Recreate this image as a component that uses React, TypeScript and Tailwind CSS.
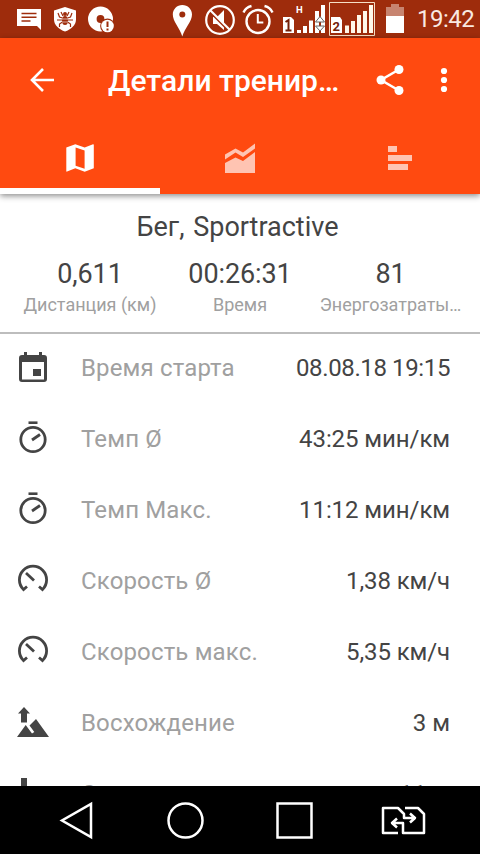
import type { ReactNode } from 'react';

const INK = '#444444';

function Glyph({ x, y, w, h, className = '', children }: { x: number; y: number; w: number; h: number; className?: string; children: ReactNode }) {
  return (
    <svg className={`shrink-0 ${className}`} width={w} height={h} viewBox={`${x} ${y} ${w} ${h}`} fill="none">
      {children}
    </svg>
  );
}

function StatusBar() {
  return (
    <div className="flex h-[38px] shrink-0 items-center bg-[#9e2c0c] text-white">
      <Glyph x={17} y={0} w={24} h={38} className="ml-[17px]">
        <path d="M17 9h24v21l-4-4H17z" fill="#fff" />
        <path d="M21.500 13.500h15M21.500 17.300h15M21.500 21h9" stroke="#9e2c0c" strokeWidth="1.500" />
      </Glyph>
      <Glyph x={54} y={0} w={22} h={38} className="ml-[13px]">
        <path d="M65 7l11 3.500v9C76 25 71 29.500 65 31.500 59 29.500 54 25 54 19.500v-9z" fill="#fff" />
        <ellipse cx="65" cy="20.500" rx="3" ry="4.500" fill="#9e2c0c" />
        <circle cx="65" cy="14" r="2" fill="#9e2c0c" />
        <path d="M62.500 18l-3-1-1.500-4M67.500 18l3-1 1.500-4M62 20h-5M68 20h5M62.500 22l-3 2v3M67.500 22l3 2v3M61 12l2 4M69 12l-2 4" stroke="#9e2c0c" strokeWidth="1.200" />
        <path d="M62 19h6M62 22h6" stroke="#fff" strokeWidth=".6" />
      </Glyph>
      <Glyph x={88} y={0} w={26} h={38} className="ml-[12px]">
        <circle cx="100.500" cy="19" r="8.200" stroke="#fff" strokeWidth="8.600" />
        <circle cx="107.500" cy="26" r="7.400" fill="#9e2c0c" />
        <circle cx="107.500" cy="26" r="6.300" fill="#fff" />
        <path d="M107.500 21.500v5.500M107.500 28.500v2" stroke="#9e2c0c" strokeWidth="2" />
      </Glyph>
      <Glyph x={172} y={0} w={20} h={38} className="ml-[58px]">
        <path d="M182.300 5c5.500 0 9.700 4.200 9.700 9.500 0 7-7 13-9.700 22-2.700-9-9.500-15-9.500-22C172.800 9.200 177 5 182.300 5z" fill="#fff" />
        <circle cx="182.300" cy="14.500" r="3" fill="#9e2c0c" />
      </Glyph>
      <Glyph x={204} y={0} w={32} h={38} className="ml-[12px]">
        <path d="M213 17v7h4l7 6V10l-7 7z" fill="#fff" />
        <path d="M211 13l17 17" stroke="#9e2c0c" strokeWidth="2" />
        <circle cx="220" cy="20" r="13.800" stroke="#fff" strokeWidth="2.200" />
        <path d="M210 10l20 20" stroke="#fff" strokeWidth="2.200" />
      </Glyph>
      <Glyph x={242} y={0} w={32} h={38} className="ml-[6px]">
        <circle cx="258" cy="21.500" r="11.500" stroke="#fff" strokeWidth="2.400" />
        <path d="M243.500 12.500q2-5 8-6.500M272.500 12.500q-2-5-8-6.500" stroke="#fff" strokeWidth="2.400" />
        <path d="M257.800 14v8.500h5.500" stroke="#fff" strokeWidth="2" />
      </Glyph>
      <Glyph x={283} y={0} w={44} h={38} className="ml-[9px]">
        <path d="M283 17h8l3 3v13h-11z" fill="#fff" />
        <path d="M285.500 22l3-2v10M285.500 30.500h6" stroke="#742008" strokeWidth="2" />
        <path d="M297 30h4v3h-4zM303 26h4v7h-4zM309 20.500h4V33h-4zM315 11h4v22h-4zM321 5h4v28h-4z" fill="#fff" />
        <text x="296" y="13" fontSize="9.500" fontWeight="700" fill="#fff" fontFamily="Roboto, sans-serif">H</text>
        <path d="M320 16.500l4.500 5.500h-9zM320 31l4.500-5h-9z" fill="#fff" stroke="#666" strokeWidth="1" />
      </Glyph>
      <Glyph x={328} y={0} w={48} h={38} className="ml-px">
        <path d="M329.500 2.500h45v33h-45z" stroke="#f6dfc6" />
        <path d="M331 17h9l2 3v13h-11z" fill="#fff" />
        <text x="332.500" y="30.500" fontSize="13" fontWeight="700" fill="#742008" fontFamily="Roboto, sans-serif">2</text>
        <path d="M345 25.500h4V33h-4zM351 21h4v12h-4zM357 15h4v18h-4zM363 11h4v22h-4zM369 5h4v28h-4z" fill="#fff8ea" />
      </Glyph>
      <Glyph x={386} y={0} w={18} h={38} className="ml-[10px]">
        <path d="M386 7h5V4h8v3h5v9h-18z" fill="#c78470" />
        <path d="M386 16h18v17h-18z" fill="#fff" />
      </Glyph>
      <span className="ml-[13px] text-[24px] leading-[38px] tracking-[-0.5px] text-[#f9e9e1]">19:42</span>
    </div>
  );
}

function Toolbar() {
  return (
    <header className="relative z-10 h-[156px] shrink-0 bg-[#ff4a10] text-white shadow-[0_2px_6px_rgba(0,0,0,0.45)]">
      <div className="flex h-[84px] items-center">
        <Glyph x={30} y={68} w={25} h={24} className="ml-[30px]">
          <path d="M54 80H32M43 69L32 80l11 11" stroke="#fff" strokeWidth="2.600" />
        </Glyph>
        <h1 className="ml-[53px] w-[240px] whitespace-nowrap pt-[2px] text-[30px] font-medium leading-[38px]">Детали тренир…</h1>
        <Glyph x={376} y={64} w={28} h={32} className="ml-[28px]">
          <path d="M399 69.500L381 80l18 10.500" stroke="#fff" strokeWidth="2.600" />
          <circle cx="399" cy="69.500" r="4.500" fill="#fff" />
          <circle cx="381" cy="80" r="4.500" fill="#fff" />
          <circle cx="399" cy="90.500" r="4.500" fill="#fff" />
        </Glyph>
        <Glyph x={440} y={64} w={8} h={32} className="ml-[36px]">
          <circle cx="444" cy="71" r="3.100" fill="#fff" />
          <circle cx="444" cy="80" r="3.100" fill="#fff" />
          <circle cx="444" cy="89" r="3.100" fill="#fff" />
        </Glyph>
      </div>
      <nav className="grid h-[72px] grid-cols-3">
        <div className="flex justify-center border-b-[6px] border-white pt-[20px]">
          <Glyph x={64} y={142} w={32} h={32}>
            <path fillRule="evenodd" d="M66.300 147.500l9-3.200 9.400 3.200 8.300-3.200q.8-.2.800.6v23.300l-9.100 3.600-9.400-3.600-8.200 3.400q-.8.300-.8-.6zM75.600 147.500v18.200l9 3.100v-18.200z" fill="#fff" />
          </Glyph>
        </div>
        <div className="flex justify-center pt-[20px]">
          <Glyph x={224} y={142} w={32} h={32}>
            <path d="M225 163l10.500-5.500 7.500 3.500 12-9V173h-30z" fill="#ffc4b2" />
            <path d="M225 154.500l10.500-6 7.500 4 12-9v5l-12 8.500-7.500-4.500-10.500 7z" fill="#ffc4b2" />
          </Glyph>
        </div>
        <div className="flex justify-center pt-[20px]">
          <Glyph x={384} y={142} w={32} h={32}>
            <path d="M388 146h9v6h-9zM388 155h24v6h-24zM388 164h20v6h-20z" fill="#ffc4b2" />
          </Glyph>
        </div>
      </nav>
    </header>
  );
}

function Stat({ value, label }: { value: string; label: string }) {
  return (
    <div className="flex flex-col items-center whitespace-nowrap">
      <span className="text-[27px] leading-[34px] tracking-[-0.1px] text-[#444]">{value}</span>
      <span className="text-[18px] leading-[28px] text-[#a0a0a0]">{label}</span>
    </div>
  );
}

function Calendar() {
  return (
    <Glyph x={16} y={350} w={34} h={36}>
      <path fillRule="evenodd" d="M24 352h3v3h12v-3h3v3h2q3 0 3 3v21q0 3-3 3H22q-3 0-3-3v-21q0-3 3-3h2zM22 362v17.500h22V362z" fill={INK} />
      <path d="M33 369h8v7h-8z" fill={INK} />
    </Glyph>
  );
}

function Stopwatch() {
  return (
    <Glyph x={16} y={421} w={34} h={36}>
      <circle cx="33" cy="439.500" r="12.200" stroke={INK} strokeWidth="2.800" />
      <path d="M28.500 422.700h9" stroke={INK} strokeWidth="2.600" />
      <path d="M32 440l8-5.500" stroke={INK} strokeWidth="2.800" />
    </Glyph>
  );
}

function Gauge() {
  return (
    <Glyph x={16} y={563} w={34} h={36}>
      <path d="M27 586.500l-3.500 3A13.600 13.600 0 1 1 42.500 589.500L39 586.500" stroke={INK} strokeWidth="2.800" />
      <path d="M26 573l8 7.500" stroke={INK} strokeWidth="2.800" />
    </Glyph>
  );
}

function Ascent() {
  return (
    <Glyph x={16} y={705} w={34} h={36}>
      <path d="M24 707l6 6.500h-3v9h-6v-9h-3z" fill={INK} />
      <path d="M17 737l8.700-12 6.300 8.500 2.300-1.500-4.800-6.500 6.500-6.500L49 737z" fill={INK} />
    </Glyph>
  );
}

function Descent() {
  return (
    <Glyph x={16} y={776} w={34} h={36}>
      <path d="M21 778h6v9h3l-6 6.500-6-6.500h3zM17 808l8.700-12 6.300 8.500 2.300-1.500-4.800-6.500 6.500-6.500L49 808z" fill={INK} />
    </Glyph>
  );
}

const rows: { icon: ReactNode; label: string; value: string; valueClass: string }[] = [
  { icon: <Calendar />, label: 'Время старта', value: '08.08.18 19:15', valueClass: 'tracking-[-0.38px]' },
  { icon: <Stopwatch />, label: 'Темп Ø', value: '43:25 мин/км', valueClass: 'tracking-[-0.08px]' },
  { icon: <Stopwatch />, label: 'Темп Макс.', value: '11:12 мин/км', valueClass: 'tracking-[-0.08px]' },
  { icon: <Gauge />, label: 'Скорость Ø', value: '1,38 км/ч', valueClass: 'tracking-[-0.1px]' },
  { icon: <Gauge />, label: 'Скорость макс.', value: '5,35 км/ч', valueClass: 'tracking-[-0.1px]' },
  { icon: <Ascent />, label: 'Восхождение', value: '3 м', valueClass: '' },
  { icon: <Descent />, label: 'Спуск', value: '11 м', valueClass: '' },
];

function NavigationBar() {
  return (
    <footer className="flex h-[68px] shrink-0 items-center bg-black">
      <Glyph x={59} y={800} w={35} h={40} className="ml-[59px]">
        <path d="M91 804v33L62 820.500z" stroke="#fff" strokeWidth="2.500" />
      </Glyph>
      <Glyph x={165} y={800} w={41} h={40} className="ml-[71px]">
        <circle cx="185.500" cy="820.500" r="17" stroke="#fff" strokeWidth="2.500" />
      </Glyph>
      <Glyph x={275} y={800} w={39} h={40} className="ml-[69px]">
        <path d="M277.500 803.500h34v34h-34z" stroke="#fff" strokeWidth="2.500" />
      </Glyph>
      <Glyph x={380} y={800} w={48} h={40} className="ml-[66px]">
        <path d="M398 833h-15v-25h15l6 6v4h10M410 813.500l5 4.500-5 4.500M405 808h13l6 6v19h-21v-10h-10M397 818.500l-5 4.500 5 4.500" stroke="#fff" strokeWidth="2.500" strokeLinejoin="round" />
      </Glyph>
    </footer>
  );
}

export default function App() {
  return (
    <div className="flex h-[854px] w-[480px] flex-col overflow-hidden bg-white font-[Roboto,'Noto_Sans',sans-serif]">
      <StatusBar />
      <Toolbar />
      <section className="h-[140px] shrink-0 border-b-2 border-[#bdbdbd] pt-[16px]">
        <h2 className="pr-[5px] text-center text-[27px] leading-[34px] text-[#444]" style={{ wordSpacing: 2 }}>Бег, Sportractive</h2>
        <div className="mt-[13px] grid grid-cols-[180px_120px_180px]">
          <Stat value="0,611" label="Дистанция (км)" />
          <Stat value="00:26:31" label="Время" />
          <div className="pl-[1px]"><Stat value="81" label="Энергозатраты…" /></div>
        </div>
      </section>
      <ul className="-mt-[2px] min-h-0 grow overflow-hidden">
        {rows.map((row) => (
          <li key={row.label} className="flex h-[71px] items-center pl-4 pr-[30px] text-[24px]">
            {row.icon}
            <span className="ml-[31px] grow tracking-[0.15px] text-[#a0a0a0]">{row.label}</span>
            <span className={`text-[#444] ${row.valueClass}`}>{row.value}</span>
          </li>
        ))}
      </ul>
      <NavigationBar />
    </div>
  );
}
